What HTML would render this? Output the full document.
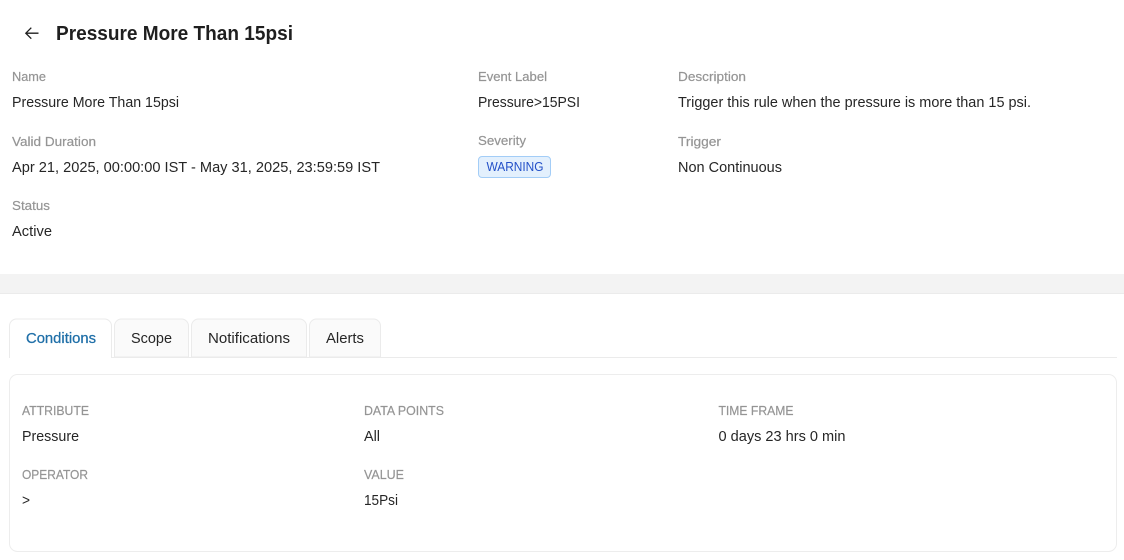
<!DOCTYPE html>
<html>
<head>
<meta charset="utf-8">
<style>
html,body{margin:0;padding:0;background:#fff;width:1124px;height:560px;overflow:hidden}
svg{display:block;font-family:"Liberation Sans",sans-serif}
.l{font-size:12.5px;fill:#959595;stroke:#959595;stroke-width:.2px}
.v{font-size:14.5px;fill:#262626}
.t{font-size:14.5px;fill:#262626}
</style>
</head>
<body>
<svg width="1124" height="560" viewBox="0 0 1124 560" xmlns="http://www.w3.org/2000/svg">
<rect width="1124" height="560" fill="#fff"/>
<path d="M38.500 33.200H25.800M31.300 27.700L25.800 33.200L31.300 38.700" fill="none" stroke="#1f1f1f" stroke-width="1.3"/>
<text x="56" y="40" font-size="20.500" font-weight="700" fill="#1f1f1f" textLength="237" lengthAdjust="spacingAndGlyphs">Pressure More Than 15psi</text>

<text class="l" x="12" y="81" textLength="34" lengthAdjust="spacingAndGlyphs">Name</text>
<text class="v" x="12" y="107" textLength="167" lengthAdjust="spacingAndGlyphs">Pressure More Than 15psi</text>
<text class="l" x="478" y="81" textLength="69" lengthAdjust="spacingAndGlyphs">Event Label</text>
<text class="v" x="478" y="107" textLength="102" lengthAdjust="spacingAndGlyphs">Pressure&gt;15PSI</text>
<text class="l" x="678" y="81" textLength="68" lengthAdjust="spacingAndGlyphs">Description</text>
<text class="v" x="678" y="107" textLength="353" lengthAdjust="spacingAndGlyphs">Trigger this rule when the pressure is more than 15 psi.</text>

<text class="l" x="12" y="146" textLength="84" lengthAdjust="spacingAndGlyphs">Valid Duration</text>
<text class="v" x="12" y="172" textLength="368" lengthAdjust="spacingAndGlyphs">Apr 21, 2025, 00:00:00 IST - May 31, 2025, 23:59:59 IST</text>
<text class="l" x="478" y="145" textLength="48" lengthAdjust="spacingAndGlyphs">Severity</text>
<rect x="478.500" y="156.500" width="72" height="21" rx="3.500" fill="#e3f0fd" stroke="#a3cdf7"/>
<text x="486.500" y="171" font-size="12.500" fill="#2350c8" textLength="57" lengthAdjust="spacingAndGlyphs">WARNING</text>
<text class="l" x="678" y="146" textLength="43" lengthAdjust="spacingAndGlyphs">Trigger</text>
<text class="v" x="678" y="172" textLength="104" lengthAdjust="spacingAndGlyphs">Non Continuous</text>

<text class="l" x="12" y="210" textLength="38" lengthAdjust="spacingAndGlyphs">Status</text>
<text class="v" x="12" y="236" textLength="40" lengthAdjust="spacingAndGlyphs">Active</text>

<rect x="0" y="274" width="1124" height="19" fill="#f3f3f3"/>
<rect x="0" y="293" width="1124" height="1" fill="#ebebeb"/>

<rect x="9" y="357" width="1108" height="1" fill="#ebebeb"/>
<path d="M9.500 358V326a7 7 0 0 1 7-7H104.500a7 7 0 0 1 7 7V358" fill="#fff" stroke="#ebebeb"/>
<path d="M114.500 357V326a7 7 0 0 1 7-7H181.500a7 7 0 0 1 7 7V357Z" fill="#fafafa" stroke="#ebebeb"/>
<path d="M191.500 357V326a7 7 0 0 1 7-7H299.500a7 7 0 0 1 7 7V357Z" fill="#fafafa" stroke="#ebebeb"/>
<path d="M309.500 357V326a7 7 0 0 1 7-7H373.500a7 7 0 0 1 7 7V357Z" fill="#fafafa" stroke="#ebebeb"/>
<rect x="10" y="356" width="101" height="2" fill="#fff"/>
<text x="26" y="343" font-size="14.500" fill="#1f6fa8" stroke="#1f6fa8" stroke-width="0.25" textLength="70" lengthAdjust="spacingAndGlyphs">Conditions</text>
<text class="t" x="131" y="343" textLength="41" lengthAdjust="spacingAndGlyphs">Scope</text>
<text class="t" x="208" y="343" textLength="82" lengthAdjust="spacingAndGlyphs">Notifications</text>
<text class="t" x="326" y="343" textLength="38" lengthAdjust="spacingAndGlyphs">Alerts</text>

<rect x="9.500" y="374.500" width="1107" height="177" rx="8" fill="#fff" stroke="#ededed"/>

<text class="l" x="22" y="415" textLength="67" lengthAdjust="spacingAndGlyphs">ATTRIBUTE</text>
<text class="v" x="22" y="441" textLength="57" lengthAdjust="spacingAndGlyphs">Pressure</text>
<text class="l" x="364" y="415" textLength="80" lengthAdjust="spacingAndGlyphs">DATA POINTS</text>
<text class="v" x="364" y="441" textLength="16" lengthAdjust="spacingAndGlyphs">All</text>
<text class="l" x="718.500" y="415" textLength="75" lengthAdjust="spacingAndGlyphs">TIME FRAME</text>
<text class="v" x="718.500" y="441" textLength="127" lengthAdjust="spacingAndGlyphs">0 days 23 hrs 0 min</text>
<text class="l" x="22" y="479" textLength="66" lengthAdjust="spacingAndGlyphs">OPERATOR</text>
<text class="v" x="22" y="505" textLength="8" lengthAdjust="spacingAndGlyphs">&gt;</text>
<text class="l" x="364" y="479" textLength="40" lengthAdjust="spacingAndGlyphs">VALUE</text>
<text class="v" x="364" y="505" textLength="34" lengthAdjust="spacingAndGlyphs">15Psi</text>
</svg>
</body>
</html>
